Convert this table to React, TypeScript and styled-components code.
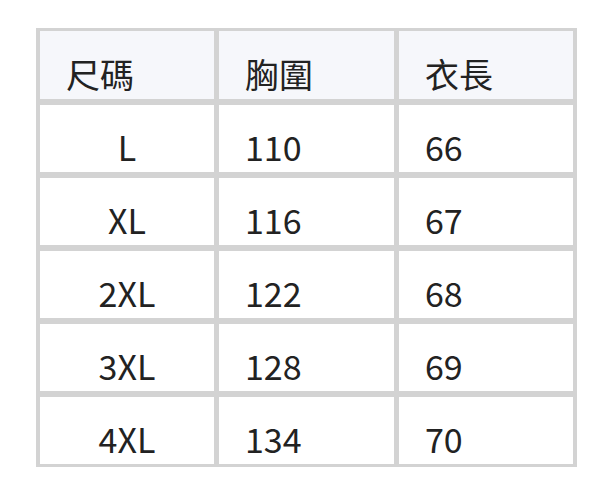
import React from 'react';
import styled, { createGlobalStyle } from 'styled-components';

const GlobalStyle = createGlobalStyle`
  body {
    margin: 0;
    background: #ffffff;
    font-family: "Noto Sans CJK TC", "Noto Sans", sans-serif;
  }
`;

const Page = styled.div`
  padding: 28px 0 0 36px;
`;

const SizeTable = styled.div`
  display: inline-grid;
  grid-template-columns: 174px 175px 174px;
  grid-template-rows: 68px repeat(5, 67px);
  gap: 6px 5px;
  padding: 3px 4px;
  background: #d3d3d3;
`;

const Cell = styled.div<{ $head?: boolean; $center?: boolean }>`
  display: flex;
  align-items: flex-end;
  justify-content: ${(p) => (p.$center ? 'center' : 'flex-start')};
  padding: ${(p) => (p.$center ? '0 0 1px 0' : '0 0 1px 26px')};
  background: ${(p) => (p.$head ? '#f6f7fb' : '#ffffff')};
  color: #222222;
  font-size: 34px;
  line-height: normal;
`;

const header = ['尺碼', '胸圍', '衣長'];

const rows = [
  ['L', '110', '66'],
  ['XL', '116', '67'],
  ['2XL', '122', '68'],
  ['3XL', '128', '69'],
  ['4XL', '134', '70'],
];

const App = () => {
  return (
    <Page>
      <GlobalStyle />
      <SizeTable>
        {header.map((h) => (
          <Cell key={h} $head>
            {h}
          </Cell>
        ))}
        {rows.map((r) =>
          r.map((v, i) => (
            <Cell key={r[0] + i} $center={i === 0}>
              {v}
            </Cell>
          ))
        )}
      </SizeTable>
    </Page>
  );
};

export default App;
